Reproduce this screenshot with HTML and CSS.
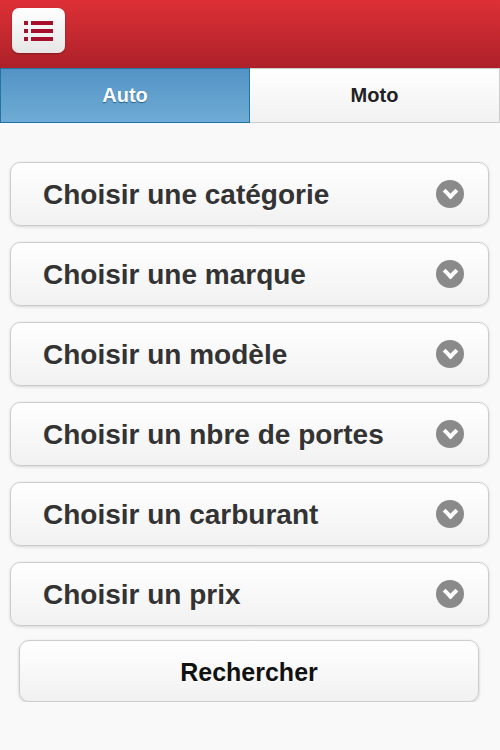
FILE: index.html
```html
<!DOCTYPE html>
<html lang="fr">

<head>
    <meta charset="UTF-8">
    <meta name="viewport" content="width=device-width, initial-scale=1.0">
    <link rel="stylesheet" href="styles.css">
    <title>Recherche</title>
</head>

<body>
<div id="header">
    <a class="menu-btn" href="#">
        <svg width="30" height="22" viewBox="0 0 30 22">
            <rect x="0" y="1" width="4" height="4" fill="#a50f2b"/>
            <rect x="7" y="1" width="22" height="4" fill="#a50f2b"/>
            <rect x="0" y="9" width="4" height="4" fill="#a50f2b"/>
            <rect x="7" y="9" width="22" height="4" fill="#a50f2b"/>
            <rect x="0" y="17" width="4" height="4" fill="#a50f2b"/>
            <rect x="7" y="17" width="22" height="4" fill="#a50f2b"/>
        </svg>
    </a>
</div>

<div class="tabs">
    <a class="tab active" href="#">Auto</a>
    <a class="tab" href="#">Moto</a>
</div>

<div id="content">
    <div class="select"><span>Choisir une catégorie</span><i class="arrow"></i></div>
    <div class="select"><span>Choisir une marque</span><i class="arrow"></i></div>
    <div class="select"><span>Choisir un modèle</span><i class="arrow"></i></div>
    <div class="select"><span>Choisir un nbre de portes</span><i class="arrow"></i></div>
    <div class="select"><span>Choisir un carburant</span><i class="arrow"></i></div>
    <div class="select"><span>Choisir un prix</span><i class="arrow"></i></div>
    <a class="search-btn" href="#">Rechercher</a>
</div>
</body>

</html>
```

FILE: styles.css
```css
* {
    margin: 0;
    padding: 0;
    box-sizing: border-box;
}

body {
    background: #f9f9f9;
    font-family: "Liberation Sans", Arial, sans-serif;
    font-weight: bold;
}

a {
    text-decoration: none;
}

#header {
    height: 68px;
    padding: 8px 12px;
    background: linear-gradient(#dd3036, #ad2129);
}

.menu-btn {
    width: 53px;
    height: 45px;
    display: flex;
    align-items: center;
    justify-content: center;
    border-radius: 7px;
    background: linear-gradient(#ffffff, #e6e6e6);
    box-shadow: 0 1px 2px rgba(0, 0, 0, .3);
}

.tabs {
    display: grid;
    grid-template-columns: 1fr 1fr;
    height: 55px;
}

.tab {
    display: flex;
    align-items: center;
    justify-content: center;
    font-size: 20px;
    color: #222;
    text-shadow: 0 1px 0 #fff;
    border: 1px solid #ccc;
    border-left: none;
    background: linear-gradient(#ffffff, #f1f1f1);
}

.tab.active {
    color: #fff;
    text-shadow: 0 1px 1px #245a85;
    border: 1px solid #2373a5;
    background: linear-gradient(#5393c5, #6facd5);
}

#content {
    display: flex;
    flex-direction: column;
    gap: 16px;
    padding: 39px 11px 0 10px;
}

.select {
    height: 64px;
    display: flex;
    align-items: center;
    justify-content: space-between;
    padding: 2px 24px 0 32px;
    border: 1px solid #ccc;
    border-radius: 10px;
    background: linear-gradient(#ffffff, #f1f1f1);
    box-shadow: 0 1px 3px rgba(0, 0, 0, .15);
    font-size: 28px;
    color: #333;
    text-shadow: 0 1px 0 #fff;
}

.select .arrow {
    margin-top: -2px;
}

.arrow {
    width: 28px;
    height: 28px;
    border-radius: 50%;
    background: #8a8a8a;
    position: relative;
}

.arrow::after {
    content: "";
    position: absolute;
    left: 9px;
    top: 6px;
    width: 7px;
    height: 7px;
    border-right: 4px solid #fff;
    border-bottom: 4px solid #fff;
    transform: rotate(45deg);
}

.search-btn {
    height: 62px;
    margin: -2px 10px 0 9px;
    padding-top: 2px;
    display: flex;
    align-items: center;
    justify-content: center;
    border: 1px solid #ccc;
    border-radius: 10px;
    background: linear-gradient(#ffffff, #f1f1f1);
    box-shadow: 0 1px 3px rgba(0, 0, 0, .2);
    font-size: 25px;
    color: #111;
    text-shadow: 0 1px 0 #fff;
}
```
